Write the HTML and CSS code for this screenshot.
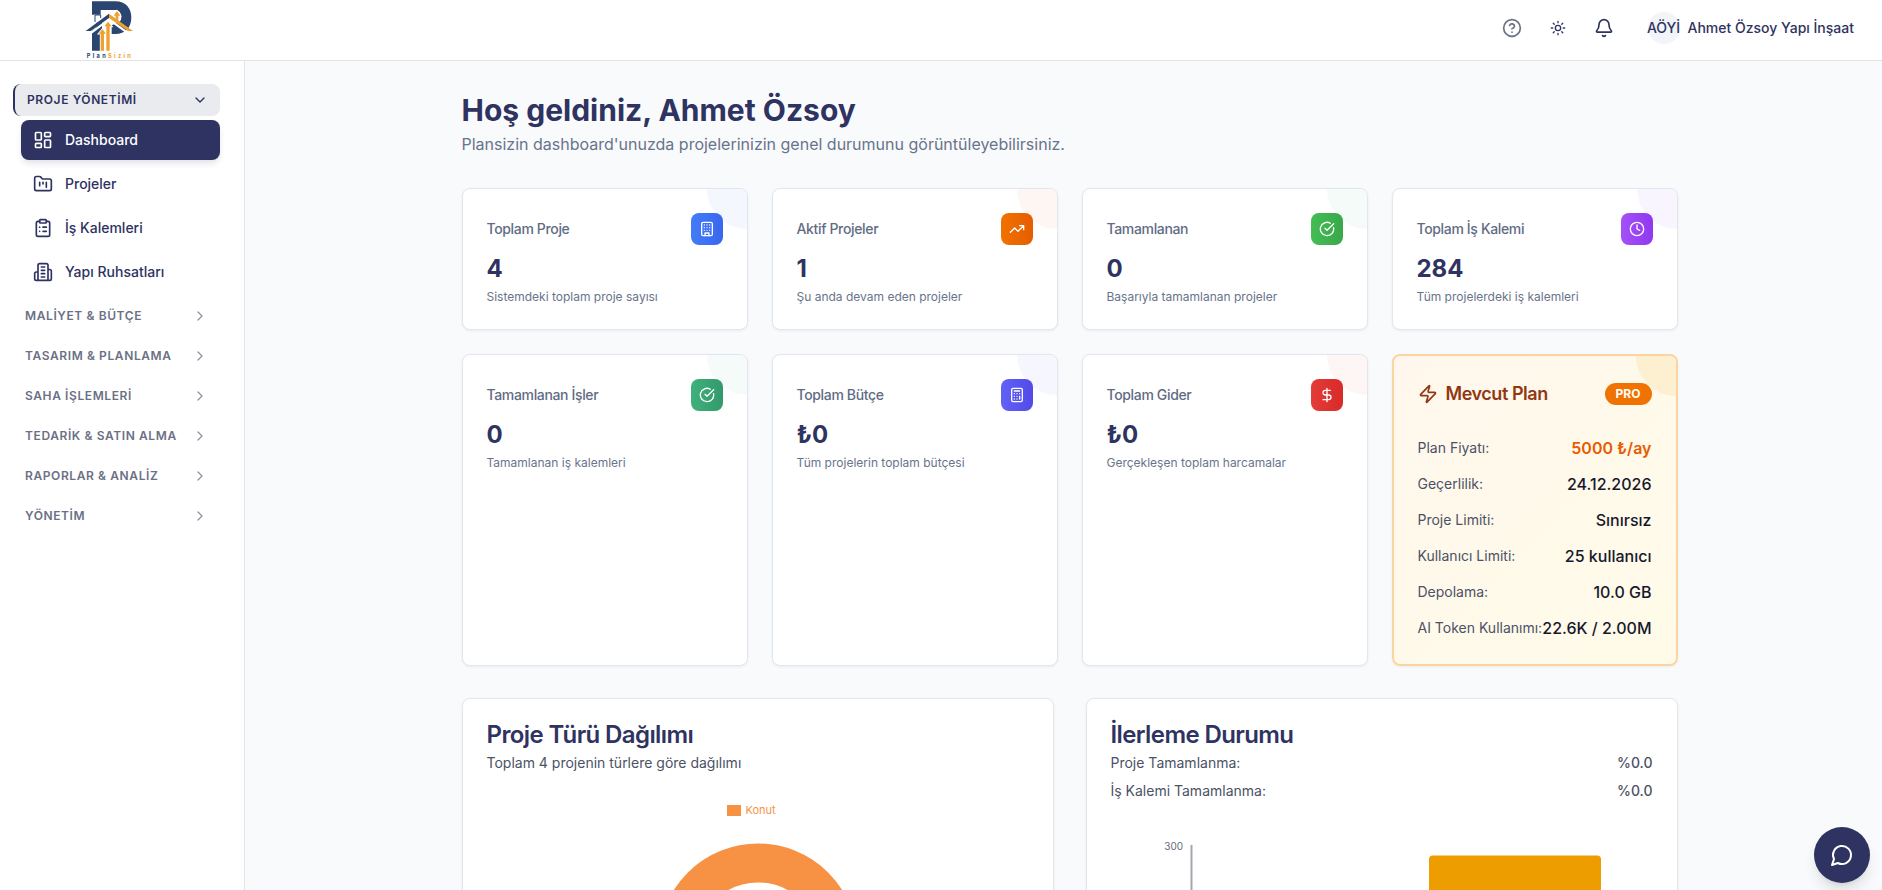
FILE: index.html
```html
<!DOCTYPE html>
<html lang="tr">
<head>
<meta charset="utf-8">
<title>Plansizin</title>
<link rel="stylesheet" href="styles.css">
</head>
<body>
<header class="topbar">
  <svg class="logo" viewBox="0 0 240 180">
    <path class="navy" fill-rule="evenodd" d="M66 4H136C168 4 184 26 184 52C184 84 166 102 136 102H125V76L141 69C150 66 154 60 154 51C154 38 146 30 134 30H96V152H66V92L80 80V44H66Z"/>
    <path class="white" d="M72 66V44H92V30H134C150 30 156 46 151 62L141 66L117 46L86 68Z"/>
    <path class="navy-line" d="M75 66V45H92V54"/>
    <path class="white-line" d="M56 104L117 58L180 104"/>
    <path class="orange outlined" d="M92 152V101H86L97 87L108 101H102V152ZM109 152V79H103L114 65L125 79H119V152ZM137 58V47H131L141 33L151 47H145V64Z"/>
    <path class="navy" d="M47 93L117 41V54L62 93Z"/>
    <path class="orange" d="M117 41L189 93H174L117 54Z"/>
    <text x="50" y="174" class="logo-text"><tspan class="navy">Plan</tspan><tspan class="orange">Sizin</tspan></text>
  </svg>
  <div class="top-actions">
    <svg class="icon i20 muted" viewBox="0 0 24 24"><circle cx="12" cy="12" r="10"/><path d="M9.09 9a3 3 0 0 1 5.83 1c0 2-3 3-3 3M12 17h.01"/></svg>
    <svg class="icon i16" viewBox="0 0 24 24"><circle cx="12" cy="12" r="4"/><path d="M12 2v2M12 20v2M4.93 4.93l1.41 1.41M17.66 17.66l1.41 1.41M2 12h2M20 12h2M6.34 17.66l-1.41 1.41M19.07 4.93l-1.41 1.41"/></svg>
    <svg class="icon i20" viewBox="0 0 24 24"><path d="M10.268 21a2 2 0 0 0 3.464 0M3.262 15.326A1 1 0 0 0 4 17h16a1 1 0 0 0 .74-1.673C19.41 13.956 18 12.499 18 8A6 6 0 0 0 6 8c0 4.499-1.411 5.956-2.738 7.326"/></svg>
    <div class="user"><span class="avatar">AÖYİ</span><span class="user-name">Ahmet Özsoy Yapı İnşaat</span></div>
  </div>
</header>
<div class="body">
  <nav class="sidebar">
    <div class="group open">PROJE YÖNETİMİ<svg class="icon i16" viewBox="0 0 24 24"><path d="m6 9 6 6 6-6"/></svg></div>
    <div class="items">
      <a class="item active"><svg class="icon i20" viewBox="0 0 24 24"><rect width="7" height="9" x="3" y="3" rx="1"/><rect width="7" height="5" x="14" y="3" rx="1"/><rect width="7" height="9" x="14" y="12" rx="1"/><rect width="7" height="5" x="3" y="16" rx="1"/></svg>Dashboard</a>
      <a class="item"><svg class="icon i20" viewBox="0 0 24 24"><path d="M4 20h16a2 2 0 0 0 2-2V8a2 2 0 0 0-2-2h-7.93a2 2 0 0 1-1.66-.9l-.82-1.2A2 2 0 0 0 7.93 3H4a2 2 0 0 0-2 2v13c0 1.1.9 2 2 2ZM8 10v4M12 10v2M16 10v6"/></svg>Projeler</a>
      <a class="item"><svg class="icon i20" viewBox="0 0 24 24"><rect width="8" height="4" x="8" y="2" rx="1"/><path d="M16 4h2a2 2 0 0 1 2 2v14a2 2 0 0 1-2 2H6a2 2 0 0 1-2-2V6a2 2 0 0 1 2-2h2M12 11h4M12 16h4M8 11h.01M8 16h.01"/></svg>İş Kalemleri</a>
      <a class="item"><svg class="icon i20" viewBox="0 0 24 24"><path d="M6 22V4a2 2 0 0 1 2-2h8a2 2 0 0 1 2 2v18ZM6 12H4a2 2 0 0 0-2 2v6a2 2 0 0 0 2 2h2M18 9h2a2 2 0 0 1 2 2v9a2 2 0 0 1-2 2h-2M10 6h4M10 10h4M10 14h4M10 18h4"/></svg>Yapı Ruhsatları</a>
    </div>
    <div class="group">MALİYET &amp; BÜTÇE<svg class="icon i16" viewBox="0 0 24 24"><path d="m9 18 6-6-6-6"/></svg></div>
    <div class="group">TASARIM &amp; PLANLAMA<svg class="icon i16" viewBox="0 0 24 24"><path d="m9 18 6-6-6-6"/></svg></div>
    <div class="group">SAHA İŞLEMLERİ<svg class="icon i16" viewBox="0 0 24 24"><path d="m9 18 6-6-6-6"/></svg></div>
    <div class="group">TEDARİK &amp; SATIN ALMA<svg class="icon i16" viewBox="0 0 24 24"><path d="m9 18 6-6-6-6"/></svg></div>
    <div class="group">RAPORLAR &amp; ANALİZ<svg class="icon i16" viewBox="0 0 24 24"><path d="m9 18 6-6-6-6"/></svg></div>
    <div class="group">YÖNETİM<svg class="icon i16" viewBox="0 0 24 24"><path d="m9 18 6-6-6-6"/></svg></div>
  </nav>
  <main class="main">
    <div class="content">
      <h1>Hoş geldiniz, Ahmet Özsoy</h1>
      <p class="lead">Plansizin dashboard'unuzda projelerinizin genel durumunu görüntüleyebilirsiniz.</p>
      <section class="stats">
        <article class="card stat blue"><div class="stat-head">Toplam Proje<span class="tile"><svg class="icon i16" viewBox="0 0 24 24"><rect width="16" height="20" x="4" y="2" rx="2"/><path d="M9 22v-4h6v4M8 6h.01M16 6h.01M12 6h.01M12 10h.01M12 14h.01M16 10h.01M16 14h.01M8 10h.01M8 14h.01"/></svg></span></div><div class="value">4</div><p>Sistemdeki toplam proje sayısı</p></article>
        <article class="card stat orange-card"><div class="stat-head">Aktif Projeler<span class="tile"><svg class="icon i16" viewBox="0 0 24 24"><path d="M22 7 13.5 15.500 8.500 10.500 2 17M16 7h6v6"/></svg></span></div><div class="value">1</div><p>Şu anda devam eden projeler</p></article>
        <article class="card stat green"><div class="stat-head">Tamamlanan<span class="tile"><svg class="icon i16" viewBox="0 0 24 24"><path d="M21.801 10A10 10 0 1 1 17 3.335M9 11l3 3L22 4"/></svg></span></div><div class="value">0</div><p>Başarıyla tamamlanan projeler</p></article>
        <article class="card stat purple"><div class="stat-head">Toplam İş Kalemi<span class="tile"><svg class="icon i16" viewBox="0 0 24 24"><circle cx="12" cy="12" r="10"/><path d="M12 6v6l4 2"/></svg></span></div><div class="value">284</div><p>Tüm projelerdeki iş kalemleri</p></article>
        <article class="card stat emerald"><div class="stat-head">Tamamlanan İşler<span class="tile"><svg class="icon i16" viewBox="0 0 24 24"><path d="M21.801 10A10 10 0 1 1 17 3.335M9 11l3 3L22 4"/></svg></span></div><div class="value">0</div><p>Tamamlanan iş kalemleri</p></article>
        <article class="card stat indigo"><div class="stat-head">Toplam Bütçe<span class="tile"><svg class="icon i16" viewBox="0 0 24 24"><rect width="16" height="20" x="4" y="2" rx="2"/><path d="M8 6h8M16 14v4M16 10h.01M12 10h.01M8 10h.01M12 14h.01M8 14h.01M12 18h.01M8 18h.01"/></svg></span></div><div class="value">₺0</div><p>Tüm projelerin toplam bütçesi</p></article>
        <article class="card stat red"><div class="stat-head">Toplam Gider<span class="tile"><svg class="icon i16" viewBox="0 0 24 24"><path d="M12 2v20M17 5H9.500a3.500 3.500 0 0 0 0 7h5a3.500 3.500 0 0 1 0 7H6"/></svg></span></div><div class="value">₺0</div><p>Gerçekleşen toplam harcamalar</p></article>
        <article class="card plan">
          <div class="plan-head"><svg class="icon i20" viewBox="0 0 24 24"><path d="M4 14a1 1 0 0 1-.78-1.630l9.900-10.200a.5.5 0 0 1 .86.46l-1.920 6.020A1 1 0 0 0 13 10h7a1 1 0 0 1 .78 1.630l-9.900 10.200a.5.5 0 0 1-.86-.46l1.920-6.020A1 1 0 0 0 11 14z"/></svg><h3>Mevcut Plan</h3><span class="badge">PRO</span></div>
          <dl>
            <div><dt>Plan Fiyatı:</dt><dd class="price">5000 ₺/ay</dd></div>
            <div><dt>Geçerlilik:</dt><dd>24.12.2026</dd></div>
            <div><dt>Proje Limiti:</dt><dd>Sınırsız</dd></div>
            <div><dt>Kullanıcı Limiti:</dt><dd>25 kullanıcı</dd></div>
            <div><dt>Depolama:</dt><dd>10.0 GB</dd></div>
            <div><dt>AI Token Kullanımı:</dt><dd>22.6K / 2.00M</dd></div>
          </dl>
        </article>
      </section>
      <section class="charts">
        <article class="card chart">
          <h2>Proje Türü Dağılımı</h2>
          <p>Toplam 4 projenin türlere göre dağılımı</p>
          <div class="legend"><i></i>Konut</div>
          <svg class="donut" viewBox="0 0 200 200"><circle cx="100" cy="100" r="80"/></svg>
        </article>
        <article class="card chart">
          <h2>İlerleme Durumu</h2>
          <p class="line">Proje Tamamlanma:<b>%0.0</b></p>
          <p class="line">İş Kalemi Tamamlanma:<b>%0.0</b></p>
          <svg class="bars" width="542" height="240" viewBox="0 0 542 240">
            <text x="72" y="20.5">300</text>
            <path class="axis" d="M80.500 16V236"/>
            <path class="bar" d="M318 236V30.500a4 4 0 0 1 4-4H486a4 4 0 0 1 4 4V236Z"/>
          </svg>
        </article>
      </section>
    </div>
  </main>
</div>
<button class="chat"><svg class="icon" viewBox="0 0 24 24"><path d="M7.900 20A9 9 0 1 0 4 16.100L2 22Z"/></svg></button>
</body>
</html>
```

FILE: styles.css
```css
* { box-sizing: border-box; margin: 0; padding: 0; }
body { height: 890px; overflow: hidden; display: flex; flex-direction: column; background: #f9fafc; color: #2e3361; font: 14px/20px Inter, "Open Sans", sans-serif; }
.icon { fill: none; stroke: currentColor; stroke-width: 2; stroke-linecap: round; stroke-linejoin: round; flex: none; width: 24px; height: 24px; }
.icon.i16 { width: 16px; height: 16px; }
.icon.i20 { width: 20px; height: 20px; }
.icon.muted { color: #6b7085; }

.topbar { height: 61px; flex: none; display: flex; justify-content: space-between; align-items: flex-start; border-bottom: 1px solid #e2e4ea; background: #fff; padding: 0 28px 0 70px; }
.logo { width: 80px; height: 60px; }
.navy { fill: #2a4670; }
.orange { fill: #eea12f; }
.outlined { stroke: #fff; stroke-width: 5; paint-order: stroke; }
.white { fill: #fff; }
.navy-line { fill: none; stroke: #2a4670; stroke-width: 3; }
.white-line { fill: none; stroke: #fff; stroke-width: 7; }
.logo-text { font-size: 17px; font-weight: 700; letter-spacing: 7px; }
.top-actions { display: flex; align-items: center; height: 56px; }
.top-actions > .icon { margin-right: 28px; }
.user { display: flex; align-items: center; gap: 8px; margin-left: 6px; font-weight: 500; }
.avatar { width: 32px; height: 32px; border-radius: 50%; background: #f1f4f8; display: flex; align-items: center; justify-content: center; }

.body { flex: 1; display: flex; min-height: 0; }
.sidebar { width: 245px; flex: none; background: #fff; border-right: 1px solid #e2e4ea; padding: 23px 24px 0 13px; }
.group { height: 32px; display: flex; align-items: center; justify-content: space-between; padding: 0 12px; margin-bottom: 8px; font-size: 12px; font-weight: 600; letter-spacing: .6px; color: #6b7085; }
.group .icon { color: #9094a5; }
.group.open { margin-bottom: 4px; background: #eaebef; color: #2e3361; border-left: 2px solid #2e3361; border-radius: 8px; }
.group.open .icon { color: #2e3361; }
.items { display: flex; flex-direction: column; gap: 4px; padding-left: 8px; margin-bottom: 8px; }
.item { height: 40px; display: flex; align-items: center; gap: 12px; padding-left: 12px; border-radius: 8px; font-weight: 500; }
.item.active { background: #2e3361; color: #fff; box-shadow: 0 4px 6px -1px #2e336126; }

.main { flex: 1; overflow: hidden; padding: 31px 204.5px 0 216.5px; }
h1 { font-size: 30px; line-height: 36px; font-weight: 700; }
.lead { margin: 4px 0 32px; font-size: 16px; line-height: 24px; color: #68748b; }
.stats { display: grid; grid-template-columns: repeat(4, 1fr); gap: 24px; }
.card { background: #fff; border: 1px solid #e2e6ee; border-radius: 8px; box-shadow: 0 1px 3px #0000000f; padding: 24px; position: relative; overflow: hidden; }
.stat::before, .plan::before { content: ""; position: absolute; width: 80px; height: 80px; border-radius: 50%; top: -40px; right: -40px; background: var(--tint); }
.stat-head { height: 32px; margin-bottom: 8px; display: flex; justify-content: space-between; align-items: center; color: #5f6c84; font-weight: 500; letter-spacing: -.35px; }
.tile { width: 32px; height: 32px; border-radius: 8px; display: flex; align-items: center; justify-content: center; color: #fff; background: linear-gradient(90deg, var(--from), var(--to)); position: relative; }
.value { font-size: 24px; line-height: 32px; font-weight: 700; }
.stat p { margin-top: 4px; font-size: 12px; line-height: 16px; color: #68748b; }
.blue { --tint: #f4f7fe; --from: #427cf8; --to: #3966ef; }
.orange-card { --tint: #fef6f2; --from: #f07200; --to: #e65d00; }
.green { --tint: #f4fbf8; --from: #42bd56; --to: #3aa848; }
.purple { --tint: #f9f5fe; --from: #a351f8; --to: #9138ef; }
.emerald { --tint: #f4fbf8; --from: #3fb17b; --to: #33996b; }
.indigo { --tint: #f6f7fe; --from: #6261f5; --to: #524ae9; }
.red { --tint: #fef6f4; --from: #e33c39; --to: #d82a29; }

.plan { --tint: #fdf0d0; border: 2px solid #fbd5a0; background: linear-gradient(135deg, #fff7ed, #fffbe8); }
.plan-head { height: 28px; display: flex; align-items: center; gap: 8px; margin-bottom: 28px; color: #913813; position: relative; }
.plan-head h3 { font-size: 18px; font-weight: 600; letter-spacing: -.45px; }
.badge { margin-left: auto; width: 47px; height: 22px; border-radius: 11px; text-align: center; line-height: 22px; background: #f07200; color: #fff; font-size: 12px; font-weight: 700; }
dl { display: flex; flex-direction: column; gap: 12px; }
dl div { display: flex; justify-content: space-between; align-items: center; height: 24px; white-space: nowrap; }
dt { color: #4b5266; }
dd { font-size: 16px; font-weight: 500; color: #17182c; }
dd.price { color: #e65d00; font-weight: 600; }

.charts { display: grid; grid-template-columns: 1fr 1fr; gap: 32px; margin-top: 32px; }
.chart { height: 420px; }
.chart h2 { font-size: 24px; line-height: 24px; font-weight: 600; letter-spacing: -.6px; margin-bottom: 6px; }
.chart p { color: #4b5266; }
.line { display: flex; justify-content: space-between; margin-bottom: 8px; }
.line b { font-weight: 500; }
.legend { display: flex; align-items: center; justify-content: center; gap: 4px; margin: 27px 12px 0 0; font-size: 11px; color: #f79244; }
.legend i { width: 14px; height: 11px; background: #f79244; }
.donut { display: block; width: 200px; height: 200px; margin: 23px auto 0; fill: none; stroke: #f79244; stroke-width: 39px; }
.bars { display: block; margin-top: 28px; }
.bars text { font-size: 10px; text-anchor: end; fill: #666b78; }
.axis { stroke: #a5a6ae; stroke-width: 2; }
.bar { fill: #ee9d00; }

.chat { position: fixed; right: 12px; bottom: 7px; width: 56px; height: 56px; border: 0; border-radius: 50%; background: #2e3361; color: #fff; display: flex; align-items: center; justify-content: center; box-shadow: 0 10px 15px -3px #0000001f, 0 4px 6px -4px #0000001f; }
```
